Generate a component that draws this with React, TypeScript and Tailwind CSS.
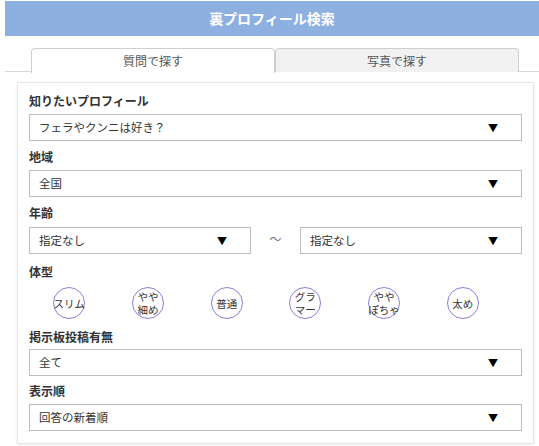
import { ReactNode } from 'react';

const font = { fontFamily: '"Noto Sans CJK JP", "Noto Sans", sans-serif' };

function Label({ children, className = '' }: { children: ReactNode; className?: string }) {
  return (
    <div className={`text-[12px] leading-[16px] font-bold text-[#333] ${className}`}>{children}</div>
  );
}

function Select({ value, className = '' }: { value: string; className?: string }) {
  return (
    <div
      className={`h-[27px] border border-[#bdbdbd] bg-white flex items-center justify-between pl-[9px] pr-[23px] text-[11.5px] text-[#333] ${className}`}
    >
      <span>{value}</span>
      <span className="text-[10px] text-black leading-none">▼</span>
    </div>
  );
}

const bodyTypes = ['スリム', 'やや\n細め', '普通', 'グラ\nマー', 'やや\nぽちゃ', '太め'];

export default function App() {
  return (
    <div className="w-[539px] h-[446px] bg-white overflow-hidden" style={font}>
      <div className="ml-[5px] mt-[1px] h-[35px] bg-[#8eb0e0] flex items-center justify-center">
        <h1 className="text-[14px] font-bold text-white">裏プロフィール検索</h1>
      </div>

      <div className="ml-[5px] mt-[12px] flex pl-[26px] border-b border-[#d9d9d9] h-[24px]">
        <div className="w-[244px] h-[25px] bg-white border border-b-0 border-[#cfcfcf] rounded-t-[4px] flex items-center justify-center text-[12px] text-[#555]">
          質問で探す
        </div>
        <div className="w-[244px] h-[24px] bg-[#f1f1f1] border border-b-0 border-[#cfcfcf] rounded-t-[4px] flex items-center justify-center text-[12px] text-[#555]">
          写真で探す
        </div>
      </div>

      <div className="ml-[17px] mt-[10px] w-[517px] border border-[#e6e6e6] shadow-[0_1px_3px_rgba(0,0,0,0.08)] px-[11px] pt-[10px] pb-[12px]">
        <Label>知りたいプロフィール</Label>
        <Select value="フェラやクンニは好き？" className="mt-[5px]" />

        <Label className="mt-[8px]">地域</Label>
        <Select value="全国" className="mt-[5px]" />

        <Label className="mt-[8px]">年齢</Label>
        <div className="mt-[6px] flex items-center">
          <Select value="指定なし" className="w-[222px]" />
          <div className="w-[49px] text-center text-[12px] text-[#777] -mt-[4px]">〜</div>
          <Select value="指定なし" className="w-[222px]" />
        </div>

        <Label className="mt-[10px]">体型</Label>
        <div className="mt-[7px] ml-[1px] w-[472px] grid grid-cols-6">
          {bodyTypes.map((t) => (
            <div key={t} className="flex justify-center">
              <div className="w-[32px] h-[32px] rounded-full border border-[#8d80dc] flex items-center justify-center text-[10.5px] leading-[13px] text-[#333] whitespace-pre text-center">
                {t}
              </div>
            </div>
          ))}
        </div>

        <Label className="mt-[10px]">掲示板投稿有無</Label>
        <Select value="全て" className="mt-[4px]" />

        <Label className="mt-[7px]">表示順</Label>
        <Select value="回答の新着順" className="mt-[5px]" />
      </div>
    </div>
  );
}
